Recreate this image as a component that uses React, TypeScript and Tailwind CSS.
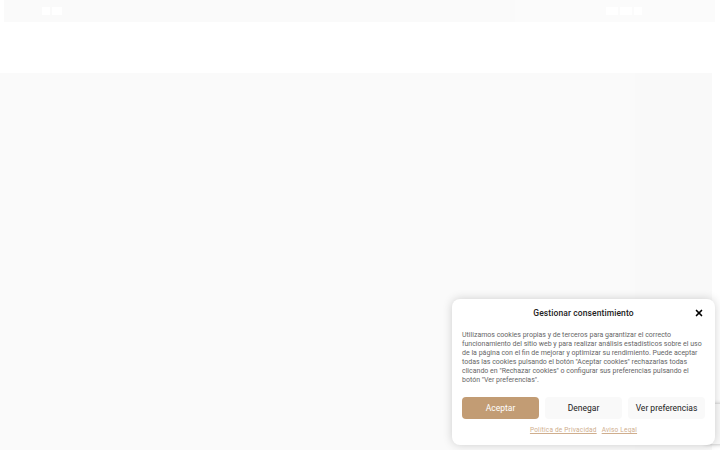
import { X } from 'lucide-react';

const font = { fontFamily: 'Roboto, "Noto Sans", sans-serif' };

function CookieModal() {
  return (
    <div
      className="absolute left-[452px] top-[299px] w-[263px] rounded-lg bg-white px-[10px] pb-[9px] pt-[8px] shadow-[0_0_10px_rgba(0,0,0,0.18)]"
      style={font}
    >
      <div className="relative flex h-[12px] items-center justify-center">
        <span className="text-[8.5px] font-medium tracking-[0.1px] text-[#222]">Gestionar consentimiento</span>
        <X className="absolute right-[1px] top-[1px] h-[10px] w-[10px] text-black" strokeWidth={4} />
      </div>
      <p className="mt-[12px] text-[7px] leading-[9px] text-[#666]">
        Utilizamos cookies propias y de terceros para garantizar el correcto funcionamiento del sitio web y para
        realizar análisis estadísticos sobre el uso de la página con el fin de mejorar y optimizar su rendimiento.
        Puede aceptar todas las cookies pulsando el botón "Aceptar cookies" rechazarlas todas clicando en "Rechazar
        cookies" o configurar sus preferencias pulsando el botón "Ver preferencias".
      </p>
      <div className="mt-[12px] grid grid-cols-3 gap-[6px]">
        <button className="h-[22px] rounded-[4px] bg-[#c29c74] text-[8.5px] text-white">Aceptar</button>
        <button className="h-[22px] rounded-[4px] bg-[#f9f9f9] text-[8.5px] text-[#222]">Denegar</button>
        <button className="h-[22px] rounded-[4px] bg-[#f9f9f9] text-[8.5px] text-[#222]">Ver preferencias</button>
      </div>
      <div className="mt-[7px] flex justify-center gap-[5px] text-[6.5px] tracking-[0.2px] text-[#cfae8e]">
        <a className="underline">Política de Privacidad</a>
        <a className="underline">Aviso Legal</a>
      </div>
    </div>
  );
}

export default function App() {
  return (
    <div className="relative h-[450px] w-[720px] overflow-hidden bg-white">
      <div className="ml-[4px] flex h-[22px] w-[711px]">
        <div className="flex w-[511px] items-center gap-[2px] bg-[#fafafa] pl-[38px]">
          <div className="h-[8px] w-[8px] bg-white" />
          <div className="h-[8px] w-[10px] bg-white" />
        </div>
        <div className="flex flex-1 items-center gap-[2px] bg-[#fbfbfb] pl-[91px]">
          <div className="h-[8px] w-[12px] bg-white" />
          <div className="h-[8px] w-[12px] bg-white" />
          <div className="h-[8px] w-[8px] bg-white" />
        </div>
      </div>
      <div className="mt-[51px] flex h-[377px] w-[712px]">
        <div className="w-[635px] bg-[#fafafa]" />
        <div className="flex-1 bg-[#f9f9f9]" />
      </div>
      <div className="absolute right-[-60px] top-[404px] h-[40px] w-[76px] rounded-[3px] bg-[#f9f9f9] shadow-[0_0_4px_rgba(0,0,0,0.3)]" />
      <CookieModal />
    </div>
  );
}
